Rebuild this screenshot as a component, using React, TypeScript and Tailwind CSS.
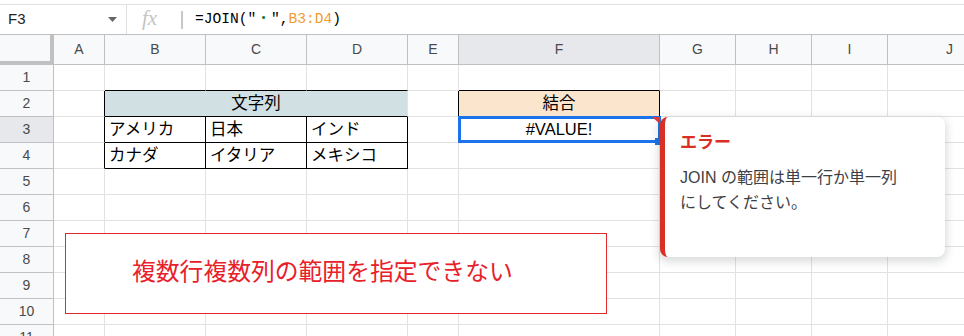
import React from 'react';

const cols = [
  { key: 'A', w: 'w-[51px]' },
  { key: 'B', w: 'w-[101px]' },
  { key: 'C', w: 'w-[101px]' },
  { key: 'D', w: 'w-[101px]' },
  { key: 'E', w: 'w-[51px]' },
  { key: 'F', w: 'w-[201px]' },
  { key: 'G', w: 'w-[76px]' },
  { key: 'H', w: 'w-[76px]' },
  { key: 'I', w: 'w-[76px]' },
  { key: 'J', w: 'w-[124px]' },
];

const rows = [1, 2, 3, 4, 5, 6, 7, 8, 9, 10, 11];

// table data (B3:D4)
const values: Record<string, string> = {
  B3: 'アメリカ',
  C3: '日本',
  D3: 'インド',
  B4: 'カナダ',
  C4: 'イタリア',
  D4: 'メキシコ',
};

const blackRight = ['A2', 'A3', 'A4', 'B3', 'B4', 'C3', 'C4', 'D2', 'D3', 'D4', 'E2', 'F2'];
const blackBottom = ['B1', 'C1', 'D1', 'B2', 'B3', 'C3', 'D3', 'B4', 'C4', 'D4', 'F1', 'F2'];

const Cell: React.FC<{ col: string; row: number; w: string }> = ({ col, row, w }) => {
  const id = col + row;
  const cls = [
    'shrink-0 h-full border-r border-b border-[#e2e2e2] flex items-center overflow-hidden whitespace-nowrap',
    w,
    blackRight.includes(id) ? 'border-r-black' : '',
    blackBottom.includes(id) ? 'border-b-black' : '',
  ].join(' ');

  if (id === 'B2') {
    return (
      <div className={cls + ' bg-[#d0e0e3] justify-center text-[16.5px]'}>文字列</div>
    );
  }
  if (id === 'F2') {
    return <div className={cls + ' bg-[#fce5cd] justify-center text-[16.5px]'}>結合</div>;
  }
  if (id === 'F3') {
    return (
      <div className={cls + ' relative justify-center text-[16.5px] overflow-visible'}>
        #VALUE!
        {/* selection */}
        <div className="absolute left-[-1px] top-[-1px] w-[203px] h-[27px] border-[3px] border-[#1a73e8]" />
        {/* fill handle */}
        <div className="absolute right-[-2px] bottom-[-3px] w-[6px] h-[7px] bg-[#1a73e8]" />
        {/* error marker */}
        <svg className="absolute right-[-1px] top-[0px]" width="8" height="7" viewBox="0 0 8 7">
          <polygon points="0,0 8,0 8,7" fill="#e53935" />
        </svg>
      </div>
    );
  }
  return <div className={cls + ' pl-[4px] text-[16.5px]'}>{values[id] ?? ''}</div>;
};

export default function App() {
  return (
    <div className="relative w-[964px] h-[336px] overflow-hidden bg-white text-black font-['Liberation_Sans','Noto_Sans_CJK_JP',sans-serif]">
      {/* Formula bar */}
      <div className="pt-[4px]">
        <div className="h-[30px] border-t border-[#e0e0e0] flex items-center">
          <div className="w-[127px] h-full flex items-center justify-between pl-[8px] pr-[9px] border-r border-[#e0e0e0]">
            <span className="text-[15px] text-[#222]">F3</span>
            <svg width="9" height="5" viewBox="0 0 9 5">
              <polygon points="0,0 9,0 4.5,5" fill="#666" />
            </svg>
          </div>
          <span className="ml-[15px] w-[24px] text-[21px] italic text-[#c4c4c4] font-['Liberation_Serif',serif] leading-none pb-[2px]">
            fx
          </span>
          <div className="ml-[15px] w-[2px] h-[18px] bg-[#c8c8c8]" />
          <div className="ml-[12px] text-[14.6px] font-['Liberation_Mono','Noto_Sans_CJK_JP',monospace] whitespace-nowrap">
            =JOIN("<span className="text-[#188038]">・</span>",<span className="text-[#f29b32]">B3:D4</span>)
          </div>
        </div>
      </div>

      {/* Column headers */}
      <div className="h-[31px] flex border-y border-[#c0c0c0] bg-[#f8f9fa] text-[14px] text-[#4a4a4a]">
        <div className="w-[54px] shrink-0 h-full border-r-4 border-b-[3px] border-[#c0c0c0]" />
        {cols.map((c) => (
          <div
            key={c.key}
            className={
              c.w +
              ' shrink-0 h-full flex items-center justify-center border-r border-[#c0c0c0] ' +
              (c.key === 'F' ? 'bg-[#e6e8eb]' : '')
            }
          >
            {c.key}
          </div>
        ))}
      </div>

      {/* Grid rows */}
      {rows.map((r) => (
        <div key={r} className="h-[26px] flex">
          <div
            className={
              'w-[54px] shrink-0 h-full flex items-center justify-center border-r border-b border-[#c0c0c0] text-[14px] text-[#4a4a4a] ' +
              (r === 3 ? 'bg-[#e6e8eb]' : 'bg-[#f8f9fa]')
            }
          >
            {r}
          </div>
          {cols
            .filter((c) => !(r === 2 && (c.key === 'C' || c.key === 'D')))
            .map((c) => (
              <Cell key={c.key} col={c.key} row={r} w={r === 2 && c.key === 'B' ? 'w-[303px]' : c.w} />
            ))}
        </div>
      ))}

      {/* Error tooltip */}
      <div className="absolute left-[660px] top-[117px] w-[285px] h-[140px] bg-white rounded-[8px] border-l-[5px] border-[#d93025] shadow-[0_3px_8px_2px_rgba(60,64,67,0.18)] pl-[15px] pt-[14px]">
        <div className="text-[17px] font-bold text-[#d93025] leading-[24px]">エラー</div>
        <div className="mt-[10px] text-[16px] text-[#3c4043] leading-[25px]">
          JOIN の範囲は単一行か単一列
          <br />
          にしてください。
        </div>
      </div>

      {/* Annotation box */}
      <div className="absolute left-[65px] top-[233px] w-[542px] h-[81px] bg-white border border-[#e0282e] flex items-center pl-[66px] pb-[8px]">
        <span className="text-[23.8px] text-[#e8202a] font-['Noto_Sans_CJK_JP',sans-serif] whitespace-nowrap">
          複数行複数列の範囲を指定できない
        </span>
      </div>
    </div>
  );
}
